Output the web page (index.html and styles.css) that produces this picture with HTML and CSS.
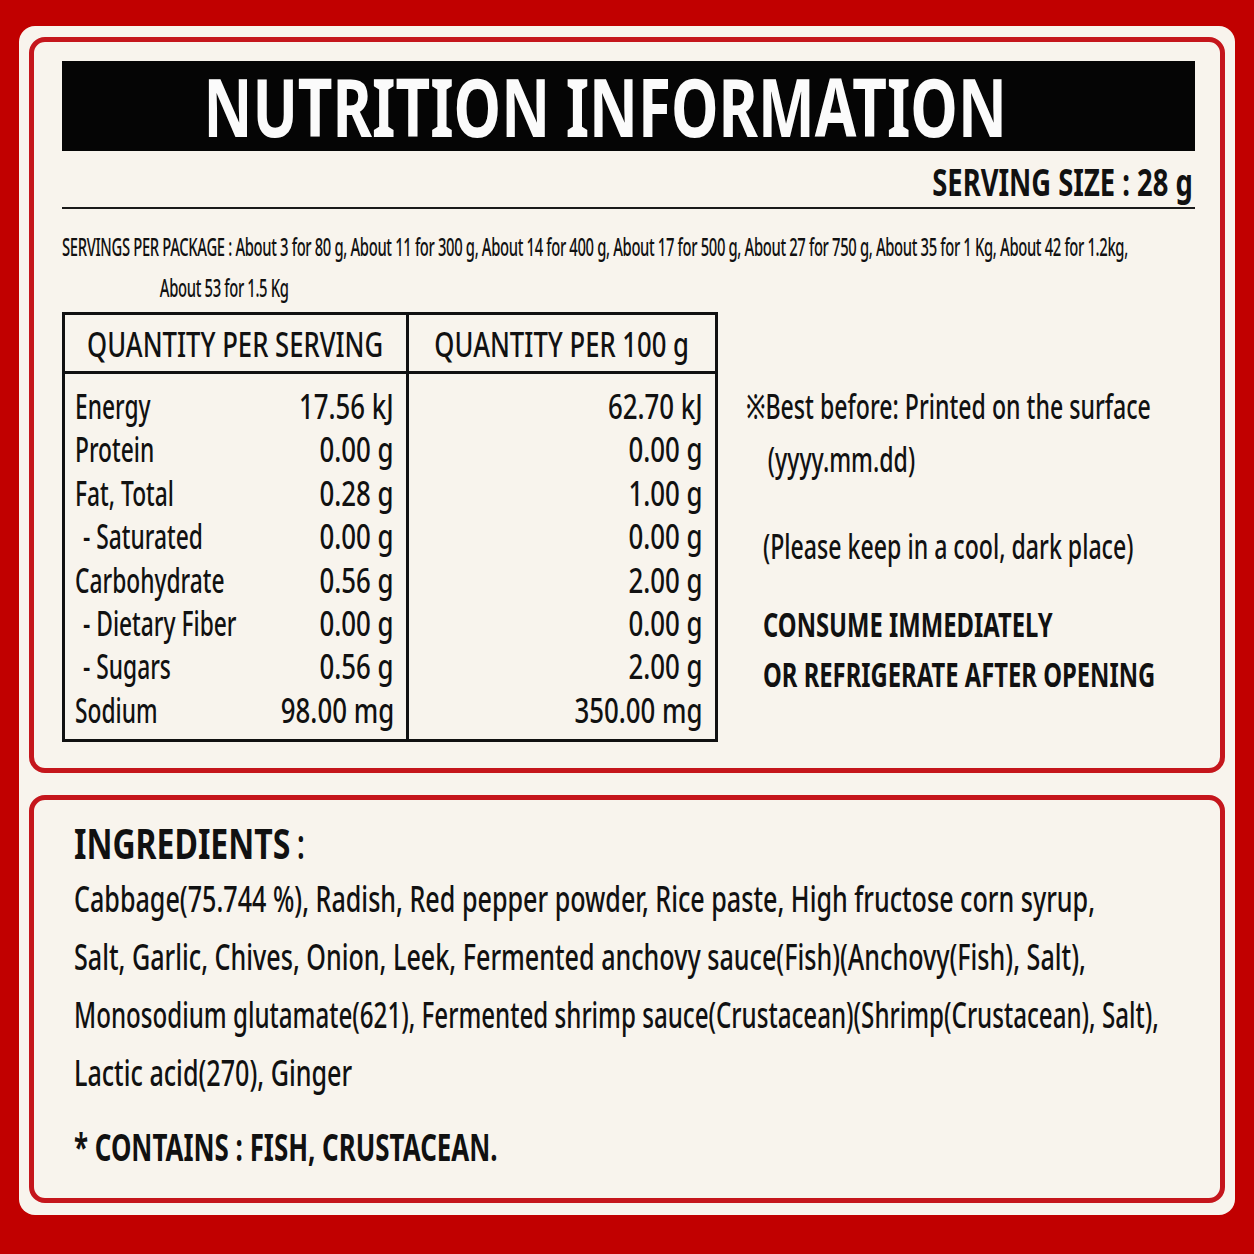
FILE: index.html
```html
<!DOCTYPE html>
<html lang="en">
<head>
<meta charset="utf-8">
<title>Nutrition Information</title>
<link rel="stylesheet" href="styles.css">
</head>
<body>
<div class="card">
  <section class="panel panel-nutrition">
    <h1 class="title-bar"><span class="title-text">NUTRITION INFORMATION</span></h1>
    <div class="serving-size"><span class="serving-text">SERVING SIZE : 28 g</span></div>
    <div class="servings">
      <span class="servings-line">SERVINGS PER PACKAGE : About 3 for 80 g, About 11 for 300 g, About 14 for 400 g, About 17 for 500 g, About 27 for 750 g, About 35 for 1 Kg, About 42 for 1.2kg,</span>
      <span class="servings-line servings-cont">About 53 for 1.5 Kg</span>
    </div>
    <div class="facts">
      <div class="nutri">
        <div class="nutri-col">
          <div class="nutri-head"><span class="head-text">QUANTITY PER SERVING</span></div>
          <div class="nutri-body">
            <div class="row"><span class="lbl">Energy</span><span class="val">17.56 kJ</span></div>
            <div class="row"><span class="lbl">Protein</span><span class="val">0.00 g</span></div>
            <div class="row"><span class="lbl">Fat, Total</span><span class="val">0.28 g</span></div>
            <div class="row"><span class="lbl sub">- Saturated</span><span class="val">0.00 g</span></div>
            <div class="row"><span class="lbl">Carbohydrate</span><span class="val">0.56 g</span></div>
            <div class="row"><span class="lbl sub">- Dietary Fiber</span><span class="val">0.00 g</span></div>
            <div class="row"><span class="lbl sub">- Sugars</span><span class="val">0.56 g</span></div>
            <div class="row"><span class="lbl">Sodium</span><span class="val">98.00 mg</span></div>
          </div>
        </div>
        <div class="nutri-col nutri-col-2">
          <div class="nutri-head"><span class="head-text">QUANTITY PER 100 g</span></div>
          <div class="nutri-body">
            <div class="row row-end"><span class="val">62.70 kJ</span></div>
            <div class="row row-end"><span class="val">0.00 g</span></div>
            <div class="row row-end"><span class="val">1.00 g</span></div>
            <div class="row row-end"><span class="val">0.00 g</span></div>
            <div class="row row-end"><span class="val">2.00 g</span></div>
            <div class="row row-end"><span class="val">0.00 g</span></div>
            <div class="row row-end"><span class="val">2.00 g</span></div>
            <div class="row row-end"><span class="val">350.00 mg</span></div>
          </div>
        </div>
      </div>
      <div class="notes">
        <div class="note note-best">
          <span class="note-line">※Best before: Printed on the surface</span>
          <span class="note-line note-date">(yyyy.mm.dd)</span>
        </div>
        <div class="note note-keep">
          <span class="note-line">(Please keep in a cool, dark place)</span>
        </div>
        <div class="note note-warn">
          <span class="note-line warn-line">CONSUME IMMEDIATELY</span>
          <span class="note-line warn-line">OR REFRIGERATE AFTER OPENING</span>
        </div>
      </div>
    </div>
  </section>
  <section class="panel panel-ingredients">
    <h2 class="ing-title"><span class="ing-title-text">INGREDIENTS<span class="ing-colon">:</span></span></h2>
    <div class="ing-text">
      <span class="ing-line">Cabbage(75.744 %), Radish, Red pepper powder, Rice paste, High fructose corn syrup,</span>
      <span class="ing-line">Salt, Garlic, Chives, Onion, Leek, Fermented anchovy sauce(Fish)(Anchovy(Fish), Salt),</span>
      <span class="ing-line ing-line-tight">Monosodium glutamate(621), Fermented shrimp sauce(Crustacean)(Shrimp(Crustacean), Salt),</span>
      <span class="ing-line">Lactic acid(270), Ginger</span>
    </div>
    <div class="contains"><span class="contains-text">* CONTAINS : FISH, CRUSTACEAN.</span></div>
  </section>
</div>
</body>
</html>
```

FILE: styles.css
```css
* { box-sizing: border-box; }

html, body { margin: 0; padding: 0; }

body {
  background: #c10000;
  padding: 26px 19px 39px 19px;
  font-family: "Noto Sans", "Open Sans", sans-serif;
  font-weight: 500;
  color: #111;
  overflow: hidden;
}

.card {
  background: #f8f4ed;
  border-radius: 16px;
  padding: 11px 10px 12px 10px;
}

.panel {
  border: 5px solid #c5161c;
  border-radius: 16px;
  background: #f8f4ed;
}

.panel-nutrition {
  padding: 19px 25px 25px 28px;
  height: 736px;
}

.panel-ingredients {
  margin-top: 22px;
  padding: 18px 30px 0 40px;
  height: 408px;
}

/* Title */
.title-bar {
  margin: 0;
  height: 90px;
  background: #050505;
  color: #fbfbfb;
  display: flex;
  align-items: center;
  justify-content: center;
  padding-right: 46px;
  font-weight: 700;
  font-size: 80px;
  line-height: 90px;
}

.title-text {
  display: inline-block;
  white-space: nowrap;
  transform: scaleX(0.752);
  transform-origin: center center;
}

.serving-size {
  text-align: right;
  font-weight: 700;
  font-size: 38px;
  line-height: 50px;
  padding-top: 5px;
  padding-right: 2px;
  border-bottom: 2px solid #1a1a1a;
  height: 58px;
}

.serving-text {
  display: inline-block;
  white-space: nowrap;
  transform: scaleX(0.72);
  transform-origin: right center;
}

.servings {
  margin-top: 17px;
  font-size: 26px;
  line-height: 41px;
  letter-spacing: -0.6px;
}

.servings-line {
  display: block;
  white-space: nowrap;
  transform: scaleX(0.569);
  transform-origin: left center;
}

.servings-cont {
  padding-left: 172px;
}

/* Facts area */
.facts {
  display: flex;
  align-items: flex-start;
  margin-top: 4px;
}

.nutri {
  display: flex;
  width: 656px;
  height: 430px;
  border: 3px solid #111;
  flex-shrink: 0;
}

.nutri-col {
  width: 341px;
  display: flex;
  flex-direction: column;
}

.nutri-col-2 {
  width: 309px;
  border-left: 3px solid #111;
}

.nutri-head {
  height: 59px;
  border-bottom: 3px solid #111;
  display: flex;
  align-items: center;
  justify-content: center;
  font-size: 34px;
  padding-top: 2px;
}

.head-text {
  display: inline-block;
  white-space: nowrap;
  transform: scaleX(0.755);
  transform-origin: center center;
}

.nutri-body {
  padding: 11px 12px 3px 10px;
}

.row {
  display: flex;
  justify-content: space-between;
  font-size: 34px;
  line-height: 43.4px;
  height: 43.4px;
}

.row-end { justify-content: flex-end; }

.lbl {
  display: inline-block;
  flex: 0 1 auto;
  min-width: 0;
  white-space: nowrap;
  transform: scaleX(0.67);
  transform-origin: left center;
}

.val {
  display: inline-block;
  flex: 0 0 auto;
  margin-left: auto;
  white-space: nowrap;
  transform: scaleX(0.76);
  transform-origin: right center;
}

.sub { margin-left: 8px; }

/* Notes */
.notes {
  flex: 1;
  min-width: 0;
  margin-left: 28px;
  margin-top: 68px;
}

.note {
  font-size: 34px;
}

.note-line {
  display: block;
  white-space: nowrap;
  transform: scaleX(0.68);
  transform-origin: left center;
}

.note-best {
  line-height: 53px;
}

.note-date {
  padding-left: 32px;
}

.note-keep {
  margin-top: 34px;
  line-height: 53px;
  padding-left: 17px;
}

.note-warn {
  margin-top: 26px;
  line-height: 50px;
  font-weight: 700;
  padding-left: 17px;
}

.warn-line {
  transform: scaleX(0.7);
}

/* Ingredients */
.ing-title {
  margin: 0;
  font-size: 41px;
  line-height: 50px;
  font-weight: 700;
}

.ing-title-text {
  display: inline-block;
  white-space: nowrap;
  transform: scaleX(0.78);
  transform-origin: left center;
}

.ing-colon {
  font-weight: 500;
  margin-left: 8px;
}

.ing-text {
  margin-top: 1px;
  font-size: 37px;
  line-height: 58px;
}

.ing-line {
  display: block;
  white-space: nowrap;
  transform: scaleX(0.679);
  transform-origin: left center;
}

.ing-line-tight {
  transform: scaleX(0.652);
}

.contains {
  margin-top: 21px;
  font-size: 37px;
  line-height: 50px;
  font-weight: 700;
}

.contains-text {
  display: inline-block;
  white-space: nowrap;
  transform: scaleX(0.70);
  transform-origin: left center;
}
```
